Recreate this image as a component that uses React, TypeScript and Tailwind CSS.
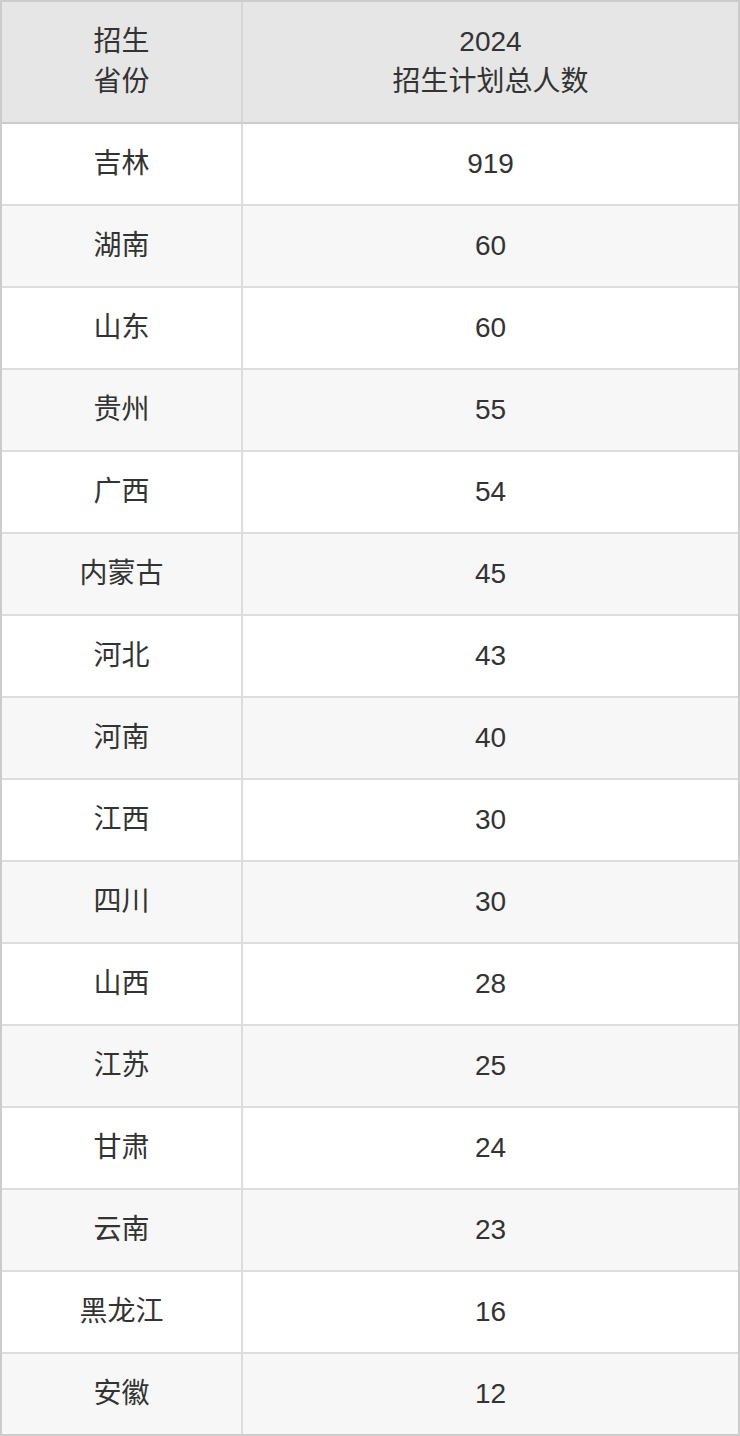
import React from 'react';

const rows: [string, number][] = [
  ['吉林', 919],
  ['湖南', 60],
  ['山东', 60],
  ['贵州', 55],
  ['广西', 54],
  ['内蒙古', 45],
  ['河北', 43],
  ['河南', 40],
  ['江西', 30],
  ['四川', 30],
  ['山西', 28],
  ['江苏', 25],
  ['甘肃', 24],
  ['云南', 23],
  ['黑龙江', 16],
  ['安徽', 12],
];

const App: React.FC = () => {
  return (
    <div
      className="w-[740px] bg-white text-[#333333] text-[28px] leading-[40px]"
      style={{ fontFamily: '"Liberation Sans", "Noto Sans CJK SC", sans-serif' }}
    >
      <div className="border-2 border-[#cccccc]">
        {/* header */}
        <div className="flex h-[122px] bg-[#e6e6e6] border-b-2 border-[#cccccc]">
          <div className="w-[241px] shrink-0 border-r-2 border-[#d6d6d6] flex flex-col items-center justify-center text-center">
            <span>招生</span>
            <span>省份</span>
          </div>
          <div className="flex-1 flex flex-col items-center justify-center text-center">
            <span>2024</span>
            <span>招生计划总人数</span>
          </div>
        </div>

        {rows.map(([province, count], i) => (
          <div
            key={province}
            className={`flex ${i === rows.length - 1 ? 'h-[80px]' : 'h-[82px] border-b-2 border-[#dddddd]'} ${
              i % 2 === 1 ? 'bg-[#f7f7f7]' : 'bg-white'
            }`}
          >
            <div className="w-[241px] shrink-0 border-r-2 border-[#dddddd] flex items-center justify-center">
              {province}
            </div>
            <div className="flex-1 flex items-center justify-center">{count}</div>
          </div>
        ))}
      </div>
    </div>
  );
};

export default App;
